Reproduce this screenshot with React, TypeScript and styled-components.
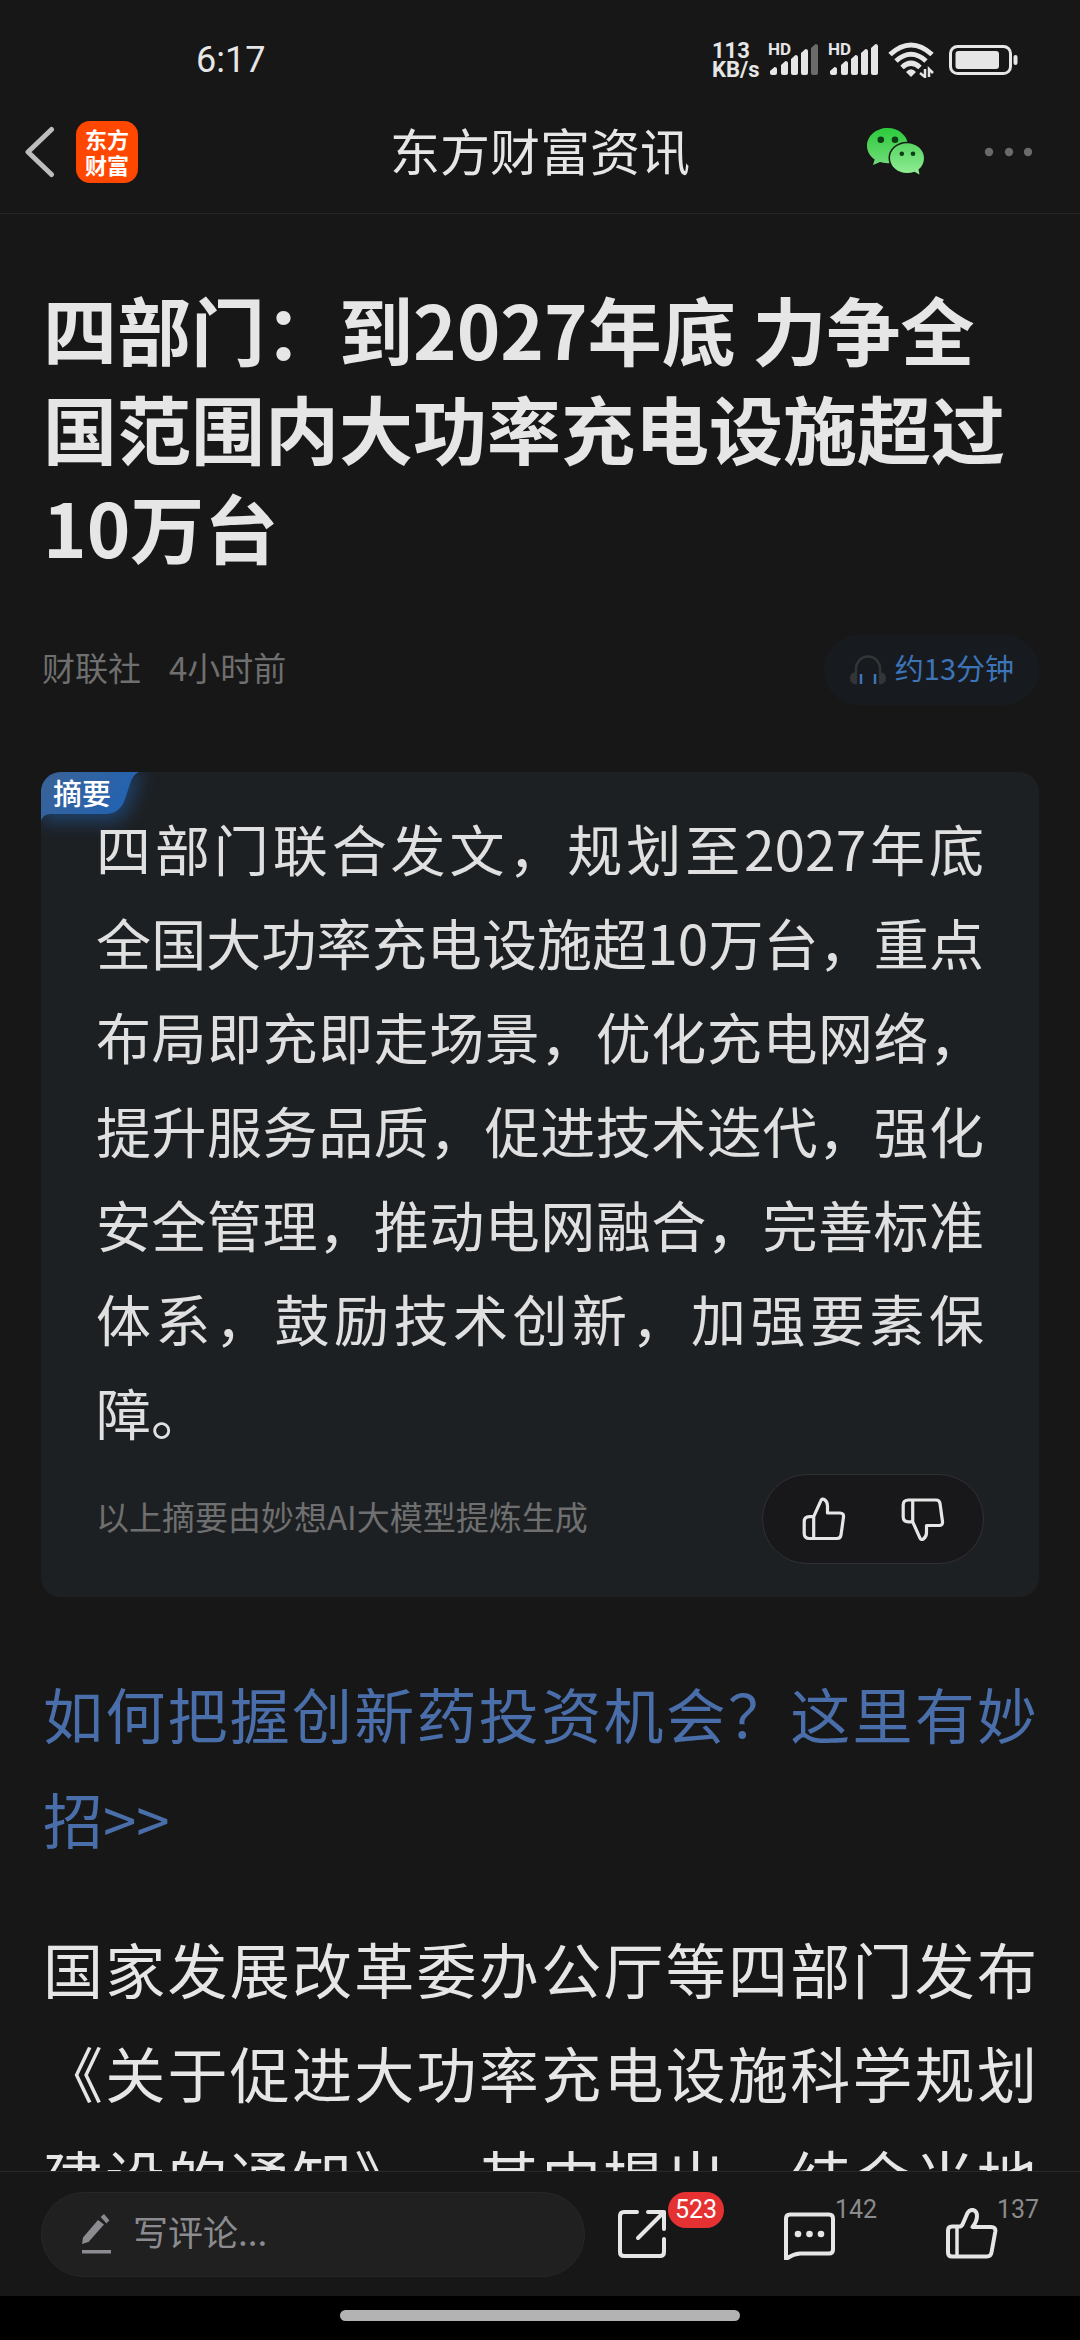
import React from "react";
import styled, { createGlobalStyle } from "styled-components";

const color = {
  page: "#171717",
  card: "#1d2023",
  text: "#e6e6e6",
  muted: "#6f6f6f",
  line: "#262626",
  link: "#4a6ea9",
};

const GlobalStyle = createGlobalStyle`
  *, *::before, *::after { box-sizing: border-box; }
  body {
    margin: 0;
    background: #000;
    color: ${color.text};
    font-family: "Noto Sans CJK SC", "Noto Sans", sans-serif;
    text-spacing-trim: space-all;
  }
  h1, p { margin: 0; }
  button {
    margin: 0;
    padding: 0;
    border: 0;
    background: none;
    color: inherit;
    font: inherit;
    cursor: pointer;
  }
  svg { display: block; flex: none; }
`;

const Screen = styled.div`
  display: flex;
  flex-direction: column;
  height: 100vh;
  overflow: hidden;
  background: ${color.page};
`;

/* Status bar */

const StatusBar = styled.div`
  display: flex;
  flex: none;
  align-items: center;
  justify-content: space-between;
  height: 90px;
  padding: 30px 61px 0 196px;
`;

const Clock = styled.time`
  font-family: Roboto, sans-serif;
  font-size: 36px;
  line-height: 48px;
`;

const StatusIcons = styled.div`
  display: flex;
  align-items: center;
`;

const NetSpeed = styled.div`
  width: 56px;
  font-family: Roboto, sans-serif;
  font-size: 22px;
  font-weight: 700;
  line-height: 19px;
`;

const Signal = styled.div`
  position: relative;
  width: 50px;
  height: 34px;
  margin-right: 10px;
`;

const HdMark = styled.span`
  position: absolute;
  top: 0;
  left: 0;
  font-family: Roboto, sans-serif;
  font-size: 17px;
  font-weight: 700;
  line-height: 12px;
`;

/* Navigation bar */

const NavBar = styled.header`
  display: grid;
  flex: none;
  grid-template-columns: 1fr auto 1fr;
  align-items: center;
  height: 124px;
  padding: 0 46px 0 24px;
  border-bottom: 1px solid ${color.line};
`;

const NavGroup = styled.div<{ $end?: boolean }>`
  display: flex;
  align-items: center;
  justify-content: ${(p) => (p.$end ? "flex-end" : "flex-start")};
  gap: ${(p) => (p.$end ? 60 : 20)}px;
`;

const NavTitle = styled.div`
  margin-left: 22px;
  padding-bottom: 6px;
  font-size: 50px;
  line-height: 60px;
`;

const AppLogo = styled.div`
  width: 62px;
  height: 62px;
  padding: 4px 9px;
  border-radius: 14px;
  background: #ff4700;
  color: #fff;
  font-size: 22px;
  font-weight: 700;
  line-height: 26px;
`;

/* Article */

const Article = styled.main`
  flex: 1;
  min-height: 0;
  overflow: hidden;
  padding: 64px 41px 0;
`;

const Headline = styled.h1`
  padding: 0 2px;
  font-size: 74px;
  font-weight: 700;
  line-height: 99px;
`;

const MetaRow = styled.div`
  display: flex;
  align-items: center;
  justify-content: space-between;
  margin-top: 60px;
`;

const Meta = styled.div`
  display: flex;
  gap: 28px;
  padding: 0 0 6px 1px;
  color: ${color.muted};
  font-size: 33px;
  line-height: 48px;
`;

const ListenButton = styled.button`
  display: flex;
  align-items: center;
  gap: 8px;
  height: 70px;
  padding: 0 25px;
  border-radius: 35px;
  background: #171b20;
  color: #3d74b8;
  font-size: 29px;
  line-height: 40px;
`;

const ListenLabel = styled.span`
  padding-bottom: 6px;
`;

const SummaryCard = styled.section`
  position: relative;
  overflow: hidden;
  margin-top: 67px;
  padding: 28px 55px 33px;
  border-radius: 20px;
  background: ${color.card};
`;

const SummaryTag = styled.div`
  position: absolute;
  top: 0;
  left: 0;
`;

const SummaryTagLabel = styled.span`
  position: absolute;
  top: 0;
  left: 12px;
  color: #fff;
  font-size: 29px;
  font-weight: 500;
  line-height: 40px;
  white-space: nowrap;
`;

const SummaryText = styled.p`
  position: relative;
  color: #e0e0e0;
  font-size: 55px;
  line-height: 94px;
  text-align: justify;
`;

const SummaryFooter = styled.div`
  display: flex;
  align-items: center;
  justify-content: space-between;
  margin-top: 16px;
  color: ${color.muted};
  font-size: 33px;
  line-height: 48px;
`;

const SummaryNote = styled.span`
  padding-bottom: 6px;
`;

const VoteGroup = styled.div`
  display: flex;
  align-items: center;
  justify-content: center;
  gap: 55px;
  width: 222px;
  height: 90px;
  border: 1px solid #303032;
  border-radius: 45px;
  background: #18181a;
  color: ${color.text};
`;

const PromoLink = styled.a`
  display: block;
  margin-top: 63px;
  padding: 0 2px;
  color: ${color.link};
  font-size: 60px;
  line-height: 105px;
  text-align: justify;
  text-decoration: none;
`;

const Paragraph = styled.p`
  margin-top: 46px;
  padding: 0 2px;
  font-size: 60px;
  line-height: 104px;
  text-align: justify;
  text-align-last: justify;
`;

/* Bottom bar */

const BottomBar = styled.footer`
  display: flex;
  flex: none;
  align-items: center;
  gap: 32px;
  height: 125px;
  padding: 0 41px;
  border-top: 1px solid #2a2a2a;
`;

const CommentBox = styled.label`
  display: flex;
  flex: 1;
  align-items: center;
  gap: 21px;
  min-width: 0;
  height: 85px;
  padding: 0 40px;
  border: 1px solid #272727;
  border-radius: 43px;
  background: #202020;
`;

const CommentInput = styled.input`
  flex: 1;
  min-width: 0;
  height: 60px;
  padding: 0 0 8px;
  border: 0;
  outline: 0;
  background: none;
  color: ${color.text};
  font: inherit;
  font-size: 35px;
  &::placeholder { color: #8b8b90; opacity: 1; }
`;

const Actions = styled.div`
  display: grid;
  flex: none;
  grid-template-columns: 167px 162px 93px;
`;

const ActionButton = styled.button`
  position: relative;
  width: 52px;
  height: 52px;
`;

const Count = styled.span`
  position: absolute;
  top: -16px;
  left: 51px;
  color: #8b8b8b;
  font-family: Roboto, sans-serif;
  font-size: 25px;
  line-height: 36px;
`;

const Badge = styled(Count)`
  padding: 0 7px;
  border-radius: 18px;
  background: #e63133;
  color: #fff;
`;

const HomeArea = styled.div`
  display: flex;
  flex: none;
  justify-content: center;
  height: 44px;
  padding-top: 14px;
  background: #000;
`;

const HomeIndicator = styled.div`
  width: 37%;
  height: 11px;
  border-radius: 6px;
  background: #b3b3b3;
`;

/* Drawings */

const BARS = [
  { x: 0, top: 24 },
  { x: 11, top: 18 },
  { x: 21, top: 12 },
  { x: 31, top: 6 },
  { x: 41, top: 1 },
];

function SignalBars({ level }: { level: number }) {
  return (
    <Signal>
      <svg width="50" height="34" viewBox="0 0 50 34" aria-hidden="true">
        {BARS.map((b, i) => (
          <path
            key={b.x}
            d={`M${b.x + 2} ${b.top + 4}L${b.x + 6.5} ${b.top}Q${b.x + 9} ${b.top} ${b.x + 9} ${b.top + 2}V30Q${b.x + 9} 32 ${b.x + 7} 32H${b.x + 4}Q${b.x + 2} 32 ${b.x + 2} 30Z`}
            fill={i < level ? color.text : "#6b6b6b"}
          />
        ))}
      </svg>
      <HdMark>HD</HdMark>
    </Signal>
  );
}

function WifiIcon() {
  return (
    <svg width="46" height="36" viewBox="0 0 46 36" aria-hidden="true">
      <g fill="none" stroke={color.text} strokeWidth="5">
        <path d="M2 12.500Q23 -6.500 44 12.500" />
        <path d="M8 19Q23 5.500 38 19" />
        <path d="M14 25.500Q23 17 32 25.500" />
      </g>
      <path d="M18 30Q23 24.500 28 30L23 35Z" fill={color.text} />
      <path d="M37 27V35L32 31M41 35V27L45 31" fill="none" stroke={color.text} strokeWidth="2.500" />
    </svg>
  );
}

const BatterySvg = styled.svg`
  margin-left: 15px;
`;

function BatteryIcon() {
  return (
    <BatterySvg width="70" height="30" viewBox="0 0 70 30" aria-hidden="true">
      <rect x="1.500" y="1.500" width="60" height="27" rx="7" fill="none" stroke={color.text} strokeWidth="3" />
      <rect x="6.500" y="6" width="43.500" height="18" rx="3" fill={color.text} />
      <rect x="64.500" y="10" width="4" height="10" rx="2" fill={color.text} />
    </BatterySvg>
  );
}

function BackIcon() {
  return (
    <svg width="32" height="52" viewBox="0 0 32 52" fill="none" stroke="#bdbdbd" strokeWidth="5" strokeLinecap="round" strokeLinejoin="round" aria-hidden="true">
      <path d="M27.500 3.500L4 26L27.500 48.500" />
    </svg>
  );
}

function WechatIcon() {
  return (
    <svg width="57" height="47" viewBox="0 0 57 47" aria-hidden="true">
      <defs>
        <linearGradient id="wechat-back" x1="0" y1="0" x2="0" y2="1">
          <stop offset="0" stopColor="#2bca3c" />
          <stop offset="1" stopColor="#72dc79" />
        </linearGradient>
        <linearGradient id="wechat-front" x1="0" y1="0" x2="0" y2="1">
          <stop offset="0" stopColor="#58d563" />
          <stop offset="1" stopColor="#90ed94" />
        </linearGradient>
      </defs>
      <path d="M20.500 0C9.200 0 0 8 0 17.800C0 23.500 3 28.400 7.700 31.600L6 37L13 34Q17 35.500 24 35L41 17C40.500 7.500 31.500 0 20.500 0Z" fill="url(#wechat-back)" />
      <path d="M40 15.300C30.500 15.300 23 21.900 23 30C23 38.300 30.500 45 40 45Q44 45 47.500 43.700L52.500 46.500L51.500 41.500C55 38.800 57 34.800 57 30C57 21.900 49.500 15.300 40 15.300Z" fill="url(#wechat-front)" stroke={color.page} strokeWidth="3" paintOrder="stroke" />
      <g fill="#0d3d14">
        <circle cx="13.800" cy="11.800" r="3.300" />
        <circle cx="28" cy="11.800" r="3.300" />
        <circle cx="34.800" cy="25.700" r="2.300" />
        <circle cx="46" cy="25.700" r="2.300" />
      </g>
    </svg>
  );
}

function MoreIcon() {
  return (
    <svg width="50" height="10" viewBox="0 0 50 10" fill="#6a6a6a" aria-hidden="true">
      <circle cx="5" cy="5" r="4.200" />
      <circle cx="25" cy="5" r="4.200" />
      <circle cx="44" cy="5" r="4.200" />
    </svg>
  );
}

function HeadphonesIcon() {
  return (
    <svg width="38" height="31" viewBox="0 0 38 31" fill="none" aria-hidden="true">
      <path d="M7 19V14A12 12.500 0 0 1 31 14V19" stroke="#333537" strokeWidth="2.500" />
      <path d="M8 17V29.500Q1 29 1 23Q1 17.500 8 17ZM30 17V29.500Q37 29 37 23Q37 17.500 30 17Z" fill="#333537" />
      <path d="M12 19V29M26 19V29" stroke="#3d74b8" strokeWidth="2.500" />
    </svg>
  );
}

function TagShape() {
  return (
    <svg width="150" height="90" viewBox="0 0 150 90" aria-hidden="true">
      <defs>
        <linearGradient id="tag-fill" x1="0" y1="0" x2="1" y2="0.4">
          <stop offset="0" stopColor="#3b6296" />
          <stop offset="1" stopColor="#2263b2" />
        </linearGradient>
        <filter id="tag-glow" x="-30%" y="-30%" width="180%" height="220%">
          <feGaussianBlur stdDeviation="9" />
        </filter>
      </defs>
      <path d="M0 0H102L88 36Q84 50 66 50H0Z" fill="#2263b2" opacity="0.5" filter="url(#tag-glow)" />
      <path d="M0 0H98Q92 2 89 12L84 27Q79 42 64 42H10Q1 42 0 50Z" fill="url(#tag-fill)" />
    </svg>
  );
}

const THUMB = "M11.700 19.700L18.800 3.800C19.500 1.900 21 1.700 22.500 2.700C25 4.400 25.500 6.500 25.500 9V16H38Q42 16 41.500 20L39 38Q38.500 41.500 35 41.500H7.500Q2.200 41.500 2.200 36.500V24.700Q2.200 19.700 7.500 19.700ZM11.700 19.700V41.500";

function ThumbIcon({ down }: { down?: boolean }) {
  return (
    <svg width="44" height="44" viewBox="0 0 44 44" fill="none" stroke={color.text} strokeWidth="3.200" strokeLinejoin="round" aria-hidden="true">
      <path d={THUMB} transform={down ? "matrix(1 0 0 -1 0 44.500)" : undefined} />
    </svg>
  );
}

function PencilIcon() {
  return (
    <svg width="30" height="40" viewBox="0 0 30 40" fill="#8b8b90" aria-hidden="true">
      <path d="M0 30L1 23.500L16 6L22 10.500L6.500 28ZM18.700 3L22 0L27.300 6.300L24.500 9.500Z" />
      <rect y="36" width="29" height="3.500" />
    </svg>
  );
}

const actionIcon = {
  width: 52,
  height: 52,
  viewBox: "0 0 52 52",
  fill: "none",
  stroke: color.text,
  strokeWidth: 4,
  strokeLinecap: "round" as const,
  strokeLinejoin: "round" as const,
  "aria-hidden": true,
};

function ShareIcon() {
  return (
    <svg {...actionIcon}>
      <path d="M20 4H7Q3 4 3 8V44Q3 48 7 48H43Q47 48 47 44V31" />
      <path d="M31 4H47V21M47 4L21 30" />
    </svg>
  );
}

function CommentIcon() {
  return (
    <svg {...actionIcon}>
      <path d="M6 6.500H45Q49 6.500 49 10.500V41.500Q49 45.500 45 45.500H16Q9 46 2 51V10.500Q2 6.500 6 6.500Z" />
      <g fill={color.text} stroke="none">
        <circle cx="14" cy="26" r="3.300" />
        <circle cx="25.500" cy="26" r="3.300" />
        <circle cx="37" cy="26" r="3.300" />
      </g>
    </svg>
  );
}

function LikeIcon() {
  return (
    <svg {...actionIcon}>
      <path d="M6 18.500H13.500Q15.500 18.500 16.500 16.500L21.500 5Q23.500 1.500 27 2Q31 3 31 8Q31 13.500 26.500 19H45Q50 19 49.300 23.500L45.500 44.500Q44.800 48.500 41 48.500H6Q2 48.500 2 44.500V22.500Q2 18.500 6 18.500Z" />
      <path d="M11 19V48" strokeWidth="3.500" />
    </svg>
  );
}

export default function App() {
  return (
    <>
      <GlobalStyle />
      <Screen>
        <StatusBar>
          <Clock>6:17</Clock>
          <StatusIcons>
            <NetSpeed>113 KB/s</NetSpeed>
            <SignalBars level={4} />
            <SignalBars level={5} />
            <WifiIcon />
            <BatteryIcon />
          </StatusIcons>
        </StatusBar>

        <NavBar>
          <NavGroup>
            <button type="button" aria-label="返回">
              <BackIcon />
            </button>
            <AppLogo>东方财富</AppLogo>
          </NavGroup>
          <NavTitle>东方财富资讯</NavTitle>
          <NavGroup $end>
            <button type="button" aria-label="微信">
              <WechatIcon />
            </button>
            <button type="button" aria-label="更多">
              <MoreIcon />
            </button>
          </NavGroup>
        </NavBar>

        <Article>
          <Headline>四部门：到2027年底 力争全国范围内大功率充电设施超过10万台</Headline>
          <MetaRow>
            <Meta>
              <span>财联社</span>
              <span>4小时前</span>
            </Meta>
            <ListenButton type="button">
              <HeadphonesIcon />
              <ListenLabel>约13分钟</ListenLabel>
            </ListenButton>
          </MetaRow>

          <SummaryCard>
            <SummaryTag>
              <TagShape />
              <SummaryTagLabel>摘要</SummaryTagLabel>
            </SummaryTag>
            <SummaryText>
              四部门联合发文，规划至2027年底全国大功率充电设施超10万台，重点布局即充即走场景，优化充电网络，提升服务品质，促进技术迭代，强化安全管理，推动电网融合，完善标准体系，鼓励技术创新，加强要素保障。
            </SummaryText>
            <SummaryFooter>
              <SummaryNote>以上摘要由妙想AI大模型提炼生成</SummaryNote>
              <VoteGroup>
                <button type="button" aria-label="赞">
                  <ThumbIcon />
                </button>
                <button type="button" aria-label="踩">
                  <ThumbIcon down />
                </button>
              </VoteGroup>
            </SummaryFooter>
          </SummaryCard>

          <PromoLink href="#">如何把握创新药投资机会？这里有妙招&gt;&gt;</PromoLink>
          <Paragraph>国家发展改革委办公厅等四部门发布《关于促进大功率充电设施科学规划建设的通知》，其中提出，结合当地</Paragraph>
        </Article>

        <BottomBar>
          <CommentBox>
            <PencilIcon />
            <CommentInput type="text" placeholder="写评论..." aria-label="写评论" />
          </CommentBox>
          <Actions>
            <ActionButton type="button" aria-label="分享">
              <ShareIcon />
              <Badge>523</Badge>
            </ActionButton>
            <ActionButton type="button" aria-label="评论">
              <CommentIcon />
              <Count>142</Count>
            </ActionButton>
            <ActionButton type="button" aria-label="点赞">
              <LikeIcon />
              <Count>137</Count>
            </ActionButton>
          </Actions>
        </BottomBar>
        <HomeArea>
          <HomeIndicator />
        </HomeArea>
      </Screen>
    </>
  );
}
